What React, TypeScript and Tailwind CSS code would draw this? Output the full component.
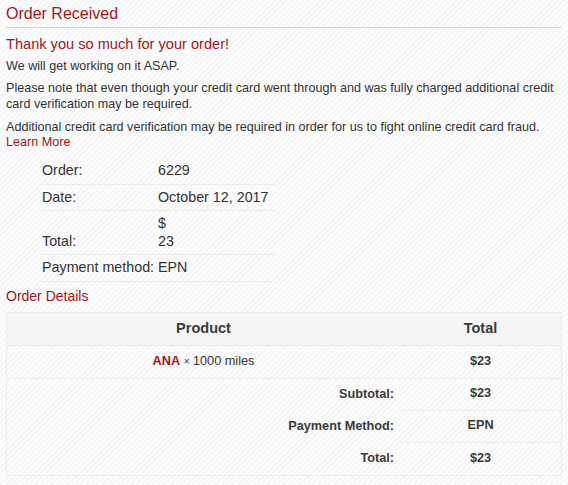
import React from "react";

const red = "text-[#a3161c]";

const infoRows = [
    { label: "Order:", value: <>6229</> },
    { label: "Date:", value: <>October 12, 2017</> },
    { label: "Total:", value: <>$<br />23</> },
    { label: "Payment method:", value: <>EPN</> },
];

const totals = [
    { label: "Subtotal:", value: "$23", line: true },
    { label: "Payment Method:", value: "EPN", line: true },
    { label: "Total:", value: "$23", line: false },
];

const App: React.FC = () => {
    return (
        <div className="min-h-[485px] w-[568px] bg-[repeating-linear-gradient(135deg,#fdfdfd_0px,#fdfdfd_2px,#f6f6f6_2px,#f6f6f6_4px)] px-[6px] pt-[4px] font-['Liberation_Sans',Arial,sans-serif] text-[#333]">
            <h2 className={`border-b border-[#d9d9d9] pb-[3px] text-[16px] leading-[20px] ${red}`}>Order Received</h2>
            <p className={`mt-[7px] text-[14.6px] leading-[18px] ${red}`}>Thank you so much for your order!</p>
            <p className="mt-[5px] text-[12.6px] leading-[16px]">We will get working on it ASAP.</p>
            <p className="mt-[6px] text-[12.6px] leading-[16px]">
                Please note that even though your credit card went through and was fully charged additional credit card verification may be required.
            </p>
            <p className="mt-[8px] text-[12.6px] leading-[15px]">
                Additional credit card verification may be required in order for us to fight online credit card fraud.
                <br />
                <a href="#" className={red}>Learn More</a>
            </p>

            <div className="ml-[34px] mt-[8px] w-[236px] text-[14.3px]">
                {infoRows.map((r) => (
                    <div key={r.label} className="flex items-end border-b border-[#ebebeb] py-[4px] leading-[17.5px]">
                        <div className="w-[118px] shrink-0 whitespace-nowrap pl-[2px]">{r.label}</div>
                        <div>{r.value}</div>
                    </div>
                ))}
            </div>

            <h3 className={`mt-[5px] text-[14px] leading-[18px] ${red}`}>Order Details</h3>

            <div className="mt-[7px] w-[556px] border border-[#ececec] text-[12.7px]">
                <div className="grid h-[33px] grid-cols-[393px_1fr] items-center border-b border-[#ececec] bg-[#f5f5f5] text-[14.5px] font-bold text-[#3a3a3a]">
                    <div className="text-center">Product</div>
                    <div className="text-center">Total</div>
                </div>
                <div className="grid h-[33px] grid-cols-[393px_1fr] items-center border-b border-[#ececec]">
                    <div className="text-center">
                        <span className={`font-bold ${red}`}>ANA</span> <span className="text-[10px]">×</span> 1000 miles
                    </div>
                    <div className="text-center font-bold text-[#3a3a3a]">$23</div>
                </div>
                {totals.map((t) => (
                    <div key={t.label} className="grid h-[32px] grid-cols-[393px_1fr] text-[#3a3a3a]">
                        <div className="flex items-center justify-end pr-[6px] font-bold">{t.label}</div>
                        <div className={`flex items-center justify-center font-bold ${t.line ? "border-b border-[#ececec]" : ""}`}>{t.value}</div>
                    </div>
                ))}
            </div>
        </div>
    );
};

export default App;
